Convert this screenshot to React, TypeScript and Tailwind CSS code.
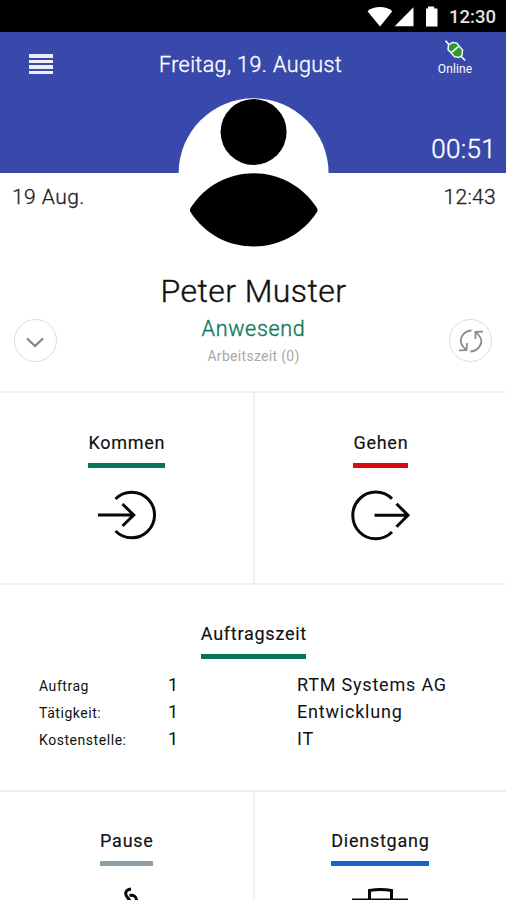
import type { ReactNode } from "react";

function SectionTitle({ children, bar, className = "" }: { children: ReactNode; bar: string; className?: string }) {
  return (
    <div className={`flex w-fit flex-col text-[18px] leading-6 font-normal tracking-[0.75px] whitespace-nowrap text-[#111] ${className}`}>
      <span className="-mr-[0.75px] [-webkit-text-stroke:0.15px]">{children}</span>
      <span className={`mt-2 h-[5px] w-full ${bar}`} />
    </div>
  );
}

function StatusBar() {
  return (
    <div className="flex h-8 shrink-0 items-center justify-end bg-black pr-[10px] text-white">
      <svg className="h-8 w-[83px]" viewBox="366 0 83 32" fill="#fff">
        <path d="M367.500 11.300C374 5.700 386 5.700 392.300 11.300L380 26.500Z" />
        <path d="M413.500 7.300V26.300H394.700Z" />
        <path d="M426 8.500h2V6.500h6.200v2h3.300v18H426z" />
      </svg>
      <span className="mt-px text-[18.5px] leading-6 font-medium text-[#e4e4e4]">12:30</span>
    </div>
  );
}

function Header() {
  return (
    <header className="flex h-[141px] shrink-0 flex-col justify-between bg-[#3949ab] text-white">
      <div className="grid grid-cols-[44px_1fr_44px] items-start pt-2 pr-[29px] pl-[27px]">
        <div className="mt-[14px] ml-[2px] flex h-[20px] w-[24px] flex-col justify-between">
          <span className="h-[3.5px] bg-[#eceef8]" />
          <span className="h-[3.5px] bg-[#eceef8]" />
          <span className="h-[3.5px] bg-[#eceef8]" />
          <span className="h-[3.5px] bg-[#eceef8]" />
        </div>
        <h1 className="mt-[9px] text-center text-[21.5px] leading-8 font-light tracking-[0.4px] whitespace-nowrap [-webkit-text-stroke:0.35px]">
          <span className="-ml-[3px]">Freitag, 19. August</span>
        </h1>
        <div className="flex flex-col items-center">
          <svg className="h-[22px] w-[24px]" viewBox="0 0 24 22" fill="none">
            <path d="M2.500.8 6 4.600M18.300 16.500l3.900 4" stroke="#fff" strokeWidth="1.600" />
            <path d="M5.500 5 9.500 2.400l4.200.7 5.900 7-.6 5.200-3 2.200-4.600-.8L5 9.500Z" fill="#249c2e" stroke="#fff" strokeWidth="1.400" />
            <path d="m8.600 12.300 6.800-5.700" stroke="#fff" strokeWidth="1.700" />
          </svg>
          <span className="text-[12px] leading-[14px] font-normal tracking-[0.1px]">Online</span>
        </div>
      </div>
      <div className="flex justify-end pr-[10px] pb-2 text-[26px] leading-8 font-light tracking-[0.3px] [-webkit-text-stroke:0.4px]">00:51</div>
    </header>
  );
}

function Avatar() {
  return (
    <svg className="absolute top-[98px] left-[178px] size-[151px]" viewBox="178 98 151 151">
      <circle cx="253.600" cy="173.300" r="75" fill="#fff" />
      <circle cx="253.600" cy="132" r="33" />
      <path d="M190.500 208C220 161.500 287 161.500 317 208Q318 210 317 212C287 258 220 258 190.500 212Q189.500 210 190.500 208Z" />
    </svg>
  );
}

function Profile() {
  return (
    <section className="flex h-[220px] shrink-0 flex-col border-b-2 border-[#efefef] bg-white">
      <div className="flex justify-between pt-2 pr-[10px] pl-[12px] text-[21px] leading-8 font-light text-[#222] [-webkit-text-stroke:0.3px]">
        <span className="tracking-[0.45px]">19 Aug.</span>
        <span className="tracking-[0.3px]">12:43</span>
      </div>
      <div className="mt-[58px] grid grid-cols-[44px_1fr_44px] pr-[13px] pl-[14px]">
        <button className="mt-[48px] flex size-[43px] items-center justify-center rounded-full border border-[#dcdcdc]">
          <svg className="mt-[3px] -ml-px h-[11px] w-[18px]" viewBox="0 0 18 11" fill="none" stroke="#858585" strokeWidth="2.300">
            <path d="m1 1.500 8 7.500 8-7.500" />
          </svg>
        </button>
        <div className="flex flex-col items-center whitespace-nowrap">
          <span className="text-[32px] leading-10 font-light tracking-[0.45px] text-[#111] [-webkit-text-stroke:0.4px]">Peter Muster</span>
          <span className="mt-[2px] text-[21.5px] leading-8 font-light tracking-[0.7px] text-[#117b5f] [-webkit-text-stroke:0.4px]">Anwesend</span>
          <span className="text-[14px] leading-[22px] font-normal tracking-[0.3px] text-[#a8a8a8]">Arbeitszeit (0)</span>
        </div>
        <button className="mt-[48px] flex size-[43px] items-center justify-center rounded-full border border-[#dcdcdc]">
          <svg className="h-[24px] w-[26px]" viewBox="0 0 26 24" fill="none" stroke="#8b8b8b" strokeWidth="1.800">
            <path d="M13.500 1.500C5 2 -.5 11 5 17.500L7.800 20.500M1 21.300l7.400-.2.800-7" />
            <path d="M12.500 22.500C21 22 26.500 13 21 6.500L18.200 3.500M25 2.700l-7.400.2-.3 7" />
          </svg>
        </button>
      </div>
    </section>
  );
}

function Actions() {
  return (
    <section className="grid h-[192px] shrink-0 grid-cols-[255px_251px] border-b-2 border-[#efefef]">
      <div className="flex flex-col items-center border-r-2 border-[#f1f1f1] pt-[38px]">
        <SectionTitle bar="bg-[#04755a]">Kommen</SectionTitle>
        <svg className="mt-[22px] h-[52px] w-[60px]" viewBox="97.500 490.500 60 52" fill="none" stroke="#080808" strokeWidth="3">
          <path d="M116 499.500A22.800 22.800 0 1 1 116 531.500" />
          <path d="M98.500 515.500H134M123 504.500l11.200 11-11.200 11" />
        </svg>
      </div>
      <div className="flex flex-col items-center pt-[38px]">
        <SectionTitle bar="bg-[#d90b12]">Gehen</SectionTitle>
        <svg className="mt-[22px] h-[52px] w-[60px]" viewBox="351.500 490.500 60 52" fill="none" stroke="#080808" strokeWidth="3">
          <path d="M392.500 499.300A23 23.400 0 1 0 392.500 532.500" />
          <path d="M375 515.800H408.500M397 504.200l11.500 11.600-11.500 11.500" />
        </svg>
      </div>
    </section>
  );
}

const rows = [
  { label: "Auftrag", id: "1", value: "RTM Systems AG" },
  { label: "Tätigkeit:", id: "1", value: "Entwicklung" },
  { label: "Kostenstelle:", id: "1", value: "IT" },
];

function OrderTime() {
  return (
    <section className="flex h-[207px] shrink-0 flex-col border-b-2 border-[#efefef] pt-[37px] pl-px">
      <SectionTitle bar="bg-[#04755a]" className="mx-auto">Auftragszeit</SectionTitle>
      <div className="mt-[12px] flex flex-col pl-[38px] text-[#111]">
        {rows.map((row) => (
          <div key={row.label} className="grid h-[27px] grid-cols-[129px_129px_1fr] items-baseline text-[18px] leading-[27px] tracking-[0.8px]">
            <span className="text-[14px] tracking-[0.55px]">{row.label}</span>
            <span>{row.id}</span>
            <span>{row.value}</span>
          </div>
        ))}
      </div>
    </section>
  );
}

function MoreActions() {
  return (
    <section className="grid min-h-0 flex-1 grid-cols-[255px_251px] overflow-hidden">
      <div className="flex flex-col items-center border-r-2 border-[#f1f1f1] pt-[37px]">
        <SectionTitle bar="bg-[#8b9eab]">Pause</SectionTitle>
        <svg className="mt-[21px] h-[13px] w-[40px] shrink-0" viewBox="107 887 40 13" fill="none" stroke="#080808" strokeWidth="3">
          <path d="M131 889c-6 1-6.500 5-3.500 8.500l3 4M129.500 895.500c4-1 7 1 7 5" />
        </svg>
      </div>
      <div className="flex flex-col items-center pt-[37px] pr-px">
        <SectionTitle bar="bg-[#1266ce]">Dienstgang</SectionTitle>
        <svg className="mt-[21px] h-[13px] w-[60px] shrink-0" viewBox="350 887 60 13" fill="none" stroke="#080808" strokeWidth="3">
          <path d="M369.500 900v-9.500q11-2 22 0V900M352 900h56" />
        </svg>
      </div>
    </section>
  );
}

export default function App() {
  return (
    <main className="relative flex h-[900px] w-[506px] flex-col overflow-hidden bg-white font-[Roboto,sans-serif]">
      <StatusBar />
      <Header />
      <Profile />
      <Actions />
      <OrderTime />
      <MoreActions />
      <Avatar />
    </main>
  );
}
